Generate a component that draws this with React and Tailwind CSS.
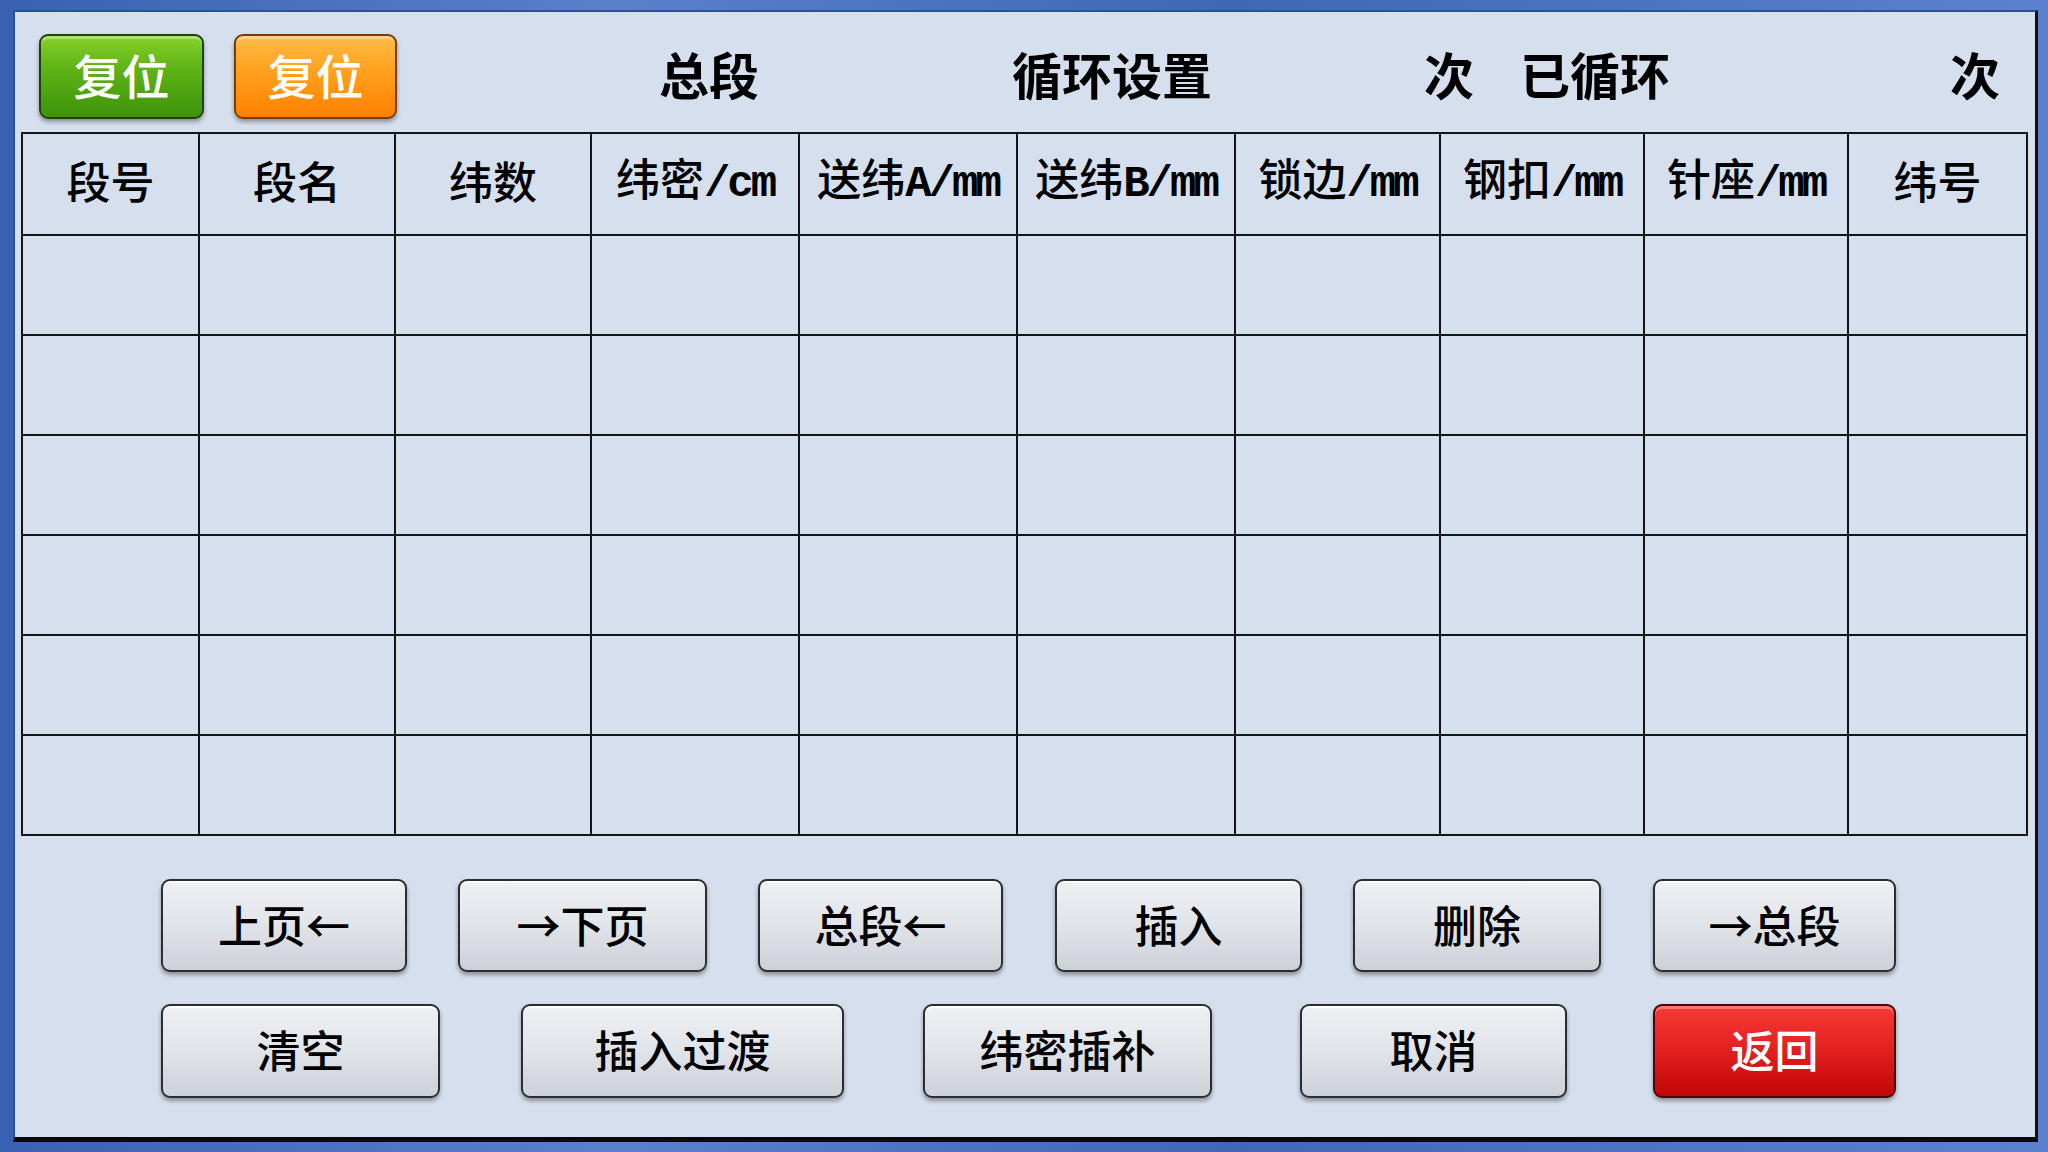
import React from "react";

const columns = [
  { w: "w-[177px]", cn: "段号" },
  { w: "w-[196px]", cn: "段名" },
  { w: "w-[196px]", cn: "纬数" },
  { w: "w-[208px]", cn: "纬密", unit: "/cm" },
  { w: "w-[218px]", cn: "送纬", unit: "A/mm" },
  { w: "w-[218px]", cn: "送纬", unit: "B/mm" },
  { w: "w-[205px]", cn: "锁边", unit: "/mm" },
  { w: "w-[204px]", cn: "钢扣", unit: "/mm" },
  { w: "w-[204px]", cn: "针座", unit: "/mm" },
  { w: "w-[179px]", cn: "纬号" },
];

const rows = [0, 1, 2, 3, 4, 5];

function GreyButton({ className, children }) {
  return (
    <button
      className={
        "flex items-center justify-center rounded-[9px] border-2 border-[#2b2d31] bg-[linear-gradient(180deg,#eef0f4_0%,#e2e5ea_45%,#cdd1d8_100%)] pb-[4px] text-[44px] font-medium leading-none text-black shadow-[inset_0_2px_0_rgba(255,255,255,0.9),0_3px_4px_rgba(0,0,0,0.35)] " +
        className
      }
    >
      {children}
    </button>
  );
}

export default function App() {
  return (
    <div className="h-[1152px] w-[2048px] overflow-hidden bg-[linear-gradient(90deg,#3a60b2_0%,#5a80cc_30%,#3f67b6_60%,#5b81cf_100%)] pb-[10px] pl-[13px] pr-[10px] pt-[10px] font-['Noto_Sans_CJK_SC',sans-serif]">
      <div className="flex h-full flex-col border-b-[5px] border-l-2 border-r-[3px] border-t-2 border-b-[#0a0a0a] border-l-[#2d4f98] border-r-[#111] border-t-[#2d4f98] bg-[#d6dfed]">
        {/* top bar */}
        <div className="ml-[24px] mt-[22px] flex h-[85px] items-center">
          <button className="flex h-[85px] w-[165px] items-center justify-center rounded-[9px] border-2 border-[#1d4410] bg-[linear-gradient(180deg,#86d22a_0%,#5fb316_40%,#3d930c_100%)] pb-[6px] text-[48px] font-medium leading-none text-white shadow-[inset_0_3px_0_rgba(255,255,255,0.35),0_3px_4px_rgba(0,0,0,0.35)]">
            复位
          </button>
          <button className="ml-[30px] flex h-[85px] w-[163px] items-center justify-center rounded-[9px] border-2 border-[#7a3c05] bg-[linear-gradient(180deg,#ffbb45_0%,#ffa01c_45%,#ff8000_100%)] pb-[6px] text-[48px] font-medium leading-none text-white shadow-[inset_0_3px_0_rgba(255,255,255,0.35),0_3px_4px_rgba(0,0,0,0.35)]">
            复位
          </button>
          <div className="flex items-center pb-[8px] text-[50px] font-bold leading-none text-black">
            <span className="ml-[262px]">总段</span>
            <span className="ml-[253px]">循环设置</span>
            <span className="ml-[212px]">次</span>
            <span className="ml-[46px]">已循环</span>
            <span className="ml-[280px]">次</span>
          </div>
        </div>

        {/* data table */}
        <table className="ml-[6px] mt-[13px] w-[2005px] table-fixed border-collapse border-2 border-[#141414]">
          <thead>
            <tr className="h-[102px]">
              {columns.map((c, i) => (
                <th
                  key={i}
                  className={c.w + " border-2 border-[#141414] p-0 pb-[8px] text-center align-middle text-[44px] font-medium leading-none text-black"}
                >
                  {c.cn}
                  {c.unit && (
                    <span className="font-['Liberation_Mono',monospace] font-bold tracking-[-3px]">{c.unit}</span>
                  )}
                </th>
              ))}
            </tr>
          </thead>
          <tbody>
            {rows.map((r) => (
              <tr key={r} className="h-[100px]">
                {columns.map((c, i) => (
                  <td key={i} className="border-2 border-[#141414] p-0"></td>
                ))}
              </tr>
            ))}
          </tbody>
        </table>

        {/* button row 1 */}
        <div className="ml-[146px] mt-[43px] flex h-[93px]">
          <GreyButton className="w-[246px]">上页←</GreyButton>
          <GreyButton className="ml-[51px] w-[249px]">→下页</GreyButton>
          <GreyButton className="ml-[51px] w-[245px]">总段←</GreyButton>
          <GreyButton className="ml-[52px] w-[247px]">插入</GreyButton>
          <GreyButton className="ml-[51px] w-[248px]">删除</GreyButton>
          <GreyButton className="ml-[52px] w-[243px]">→总段</GreyButton>
        </div>

        {/* button row 2 */}
        <div className="ml-[146px] mt-[32px] flex h-[94px]">
          <GreyButton className="w-[279px]">清空</GreyButton>
          <GreyButton className="ml-[81px] w-[323px]">插入过渡</GreyButton>
          <GreyButton className="ml-[79px] w-[289px]">纬密插补</GreyButton>
          <GreyButton className="ml-[88px] w-[267px]">取消</GreyButton>
          <button className="ml-[86px] flex w-[243px] items-center justify-center rounded-[9px] border-2 border-[#4d0606] bg-[linear-gradient(180deg,#f53a36_0%,#e42222_45%,#c10606_100%)] pb-[4px] text-[44px] font-medium leading-none text-white shadow-[inset_0_3px_0_rgba(255,255,255,0.3),0_3px_4px_rgba(0,0,0,0.35)]">
            返回
          </button>
        </div>
      </div>
    </div>
  );
}
